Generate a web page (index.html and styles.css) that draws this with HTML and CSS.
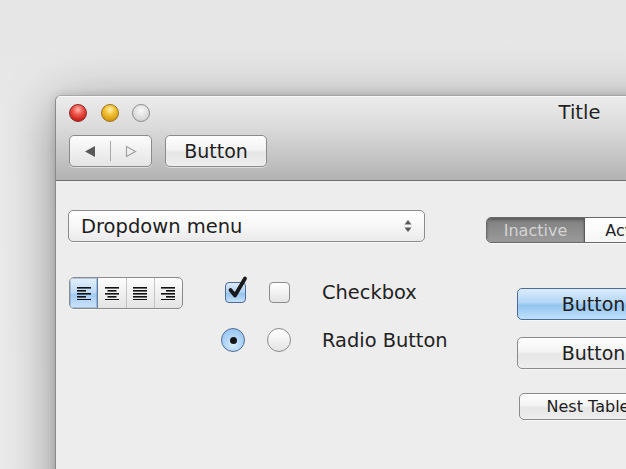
FILE: index.html
```html
<!DOCTYPE html>
<html>
<head>
<meta charset="utf-8">
<link rel="stylesheet" href="styles.css">
</head>
<body>
<div class="desktop">
  <div class="window">
    <div class="titlebar">
      <div class="title-row">
        <div class="lights">
          <span class="light red"></span>
          <span class="light yellow"></span>
          <span class="light gray"></span>
        </div>
        <div class="title">Title</div>
        <div></div>
      </div>
      <div class="toolbar">
        <div class="seg nav">
          <span class="seg-item">
            <svg width="12" height="13" viewBox="0 0 12 13"><path d="M1 6.5 L11 1 L11 12 Z" fill="#585858"/></svg>
          </span>
          <span class="seg-item">
            <svg width="12" height="13" viewBox="0 0 12 13"><path d="M1.5 1.5 L10.5 6.5 L1.5 11.5 Z" fill="none" stroke="#a2a2a2" stroke-width="1.2"/></svg>
          </span>
        </div>
        <div class="btn tb-btn">Button</div>
      </div>
    </div>
    <div class="content">
      <div class="col-left">
        <div class="dropdown">
          <span>Dropdown menu</span>
          <svg class="updown" width="8" height="14" viewBox="0 0 8 14"><path d="M4 1 L7.5 5.5 L0.5 5.5 Z M4 13 L7.5 8.5 L0.5 8.5 Z" fill="#5a5a5a"/></svg>
        </div>
        <div class="row2">
          <div class="seg align">
            <span class="seg-item sel">
              <svg width="14" height="14" viewBox="0 0 14 14" fill="#111"><rect x="0" y="1" width="14" height="1.6"/><rect x="0" y="4" width="9" height="1.6"/><rect x="0" y="7" width="14" height="1.6"/><rect x="0" y="10" width="9" height="1.6"/><rect x="0" y="13" width="14" height="1.4"/></svg>
            </span>
            <span class="seg-item">
              <svg width="14" height="14" viewBox="0 0 14 14" fill="#111"><rect x="0" y="1" width="14" height="1.6"/><rect x="2.5" y="4" width="9" height="1.6"/><rect x="0" y="7" width="14" height="1.6"/><rect x="2.5" y="10" width="9" height="1.6"/><rect x="0" y="13" width="14" height="1.4"/></svg>
            </span>
            <span class="seg-item">
              <svg width="14" height="14" viewBox="0 0 14 14" fill="#111"><rect x="0" y="1" width="14" height="1.6"/><rect x="0" y="4" width="14" height="1.6"/><rect x="0" y="7" width="14" height="1.6"/><rect x="0" y="10" width="14" height="1.6"/><rect x="0" y="13" width="14" height="1.4"/></svg>
            </span>
            <span class="seg-item">
              <svg width="14" height="14" viewBox="0 0 14 14" fill="#111"><rect x="0" y="1" width="14" height="1.6"/><rect x="5" y="4" width="9" height="1.6"/><rect x="0" y="7" width="14" height="1.6"/><rect x="5" y="10" width="9" height="1.6"/><rect x="0" y="13" width="14" height="1.4"/></svg>
            </span>
          </div>
          <div class="checks">
            <span class="box checked">
              <svg class="tick" width="22" height="24" viewBox="0 0 22 24"><path d="M4.5 13 L9 18.5 L19 1.5" fill="none" stroke="#1a1a1a" stroke-width="3.8" stroke-linecap="round" stroke-linejoin="round"/></svg>
            </span>
            <span class="box"></span>
            <span class="label">Checkbox</span>
            <span class="radio checked"><span class="dot"></span></span>
            <span class="radio"></span>
            <span class="label">Radio Button</span>
          </div>
        </div>
      </div>
      <div class="col-right">
        <div class="tabs">
          <span class="tab off">Inactive</span>
          <span class="tab on">Active</span>
        </div>
        <div class="btn wide blue">Button</div>
        <div class="btn wide second">Button</div>
        <div class="btn small">Nest Table</div>
      </div>
    </div>
  </div>
</div>
</body>
</html>
```
FILE: styles.css
```css
html, body {
  margin: 0;
  padding: 0;
}
body {
  width: 626px;
  height: 469px;
  overflow: hidden;
  background: linear-gradient(180deg, #e5e5e5 0%, #ebebeb 40%, #ececec 100%);
  font-family: "DejaVu Sans", "Liberation Sans", sans-serif;
  color: #1e1e1e;
}
.desktop {
  padding: 95px 0 0 55px;
  height: 469px;
  box-sizing: border-box;
}
.window {
  width: 1048px;
  height: 520px;
  background: #ededed;
  border: 1px solid #8a8a8a;
  border-top-color: #a8a8a8;
  border-radius: 6px 6px 0 0;
  box-shadow: 0 12px 55px rgba(0, 0, 0, 0.42), 0 0 8px rgba(0,0,0,0.15);
  overflow: hidden;
}
.titlebar {
  background: linear-gradient(180deg, #ececec 0%, #dcdcdc 35%, #c6c6c6 70%, #b3b3b3 100%);
  border-bottom: 1px solid #6e6e6e;
  box-shadow: inset 0 1px 0 rgba(255,255,255,0.8);
  padding: 8px 0 13px 13px;
  height: 63px;
}
.title-row {
  display: grid;
  grid-template-columns: 1fr auto 1fr;
  align-items: center;
  height: 18px;
  margin-left: -13px;
  padding-left: 13px;
}
.lights {
  display: flex;
  gap: 13.5px;
}
.light {
  width: 18px;
  height: 18px;
  border-radius: 50%;
  box-sizing: border-box;
}
.red {
  background: radial-gradient(circle at 50% 30%, #ffb8b0 0%, #f05a50 35%, #c8201a 75%, #a21410 100%);
  border: 1px solid #8c2a26;
}
.yellow {
  background: radial-gradient(circle at 50% 30%, #fff0b0 0%, #f2c43a 35%, #d89a10 75%, #b07a08 100%);
  border: 1px solid #9a7420;
}
.gray {
  background: radial-gradient(circle at 50% 35%, #fafafa 0%, #e2e2e2 45%, #c8c8c8 100%);
  border: 1px solid #8f8f8f;
}
.title {
  font-size: 19.5px;
  color: #222;
  text-shadow: 0 1px 0 rgba(255,255,255,0.5);
  margin-left: -14px;
  line-height: 18px;
}
.toolbar {
  display: flex;
  gap: 13px;
  margin-top: 13px;
}
.seg {
  display: flex;
  border: 1px solid #8b8b8b;
  border-radius: 5px;
  background: linear-gradient(180deg, #fdfdfd 0%, #f0f0f0 50%, #e4e4e4 100%);
  box-sizing: border-box;
  overflow: hidden;
  box-shadow: 0 1px 0 rgba(255,255,255,0.5);
  flex-shrink: 0;
}
.nav {
  width: 83px;
  height: 32px;
}
.nav .seg-item {
  flex: 1;
  display: flex;
  align-items: center;
  justify-content: center;
}
.nav .seg-item + .seg-item {
  border-left: 1px solid #a8a8a8;
  margin: 5px 0;
}
.btn {
  box-sizing: border-box;
  height: 32px;
  border: 1px solid #8b8b8b;
  border-radius: 5px;
  background: linear-gradient(180deg, #fefefe 0%, #f3f3f3 45%, #e6e6e6 55%, #eeeeee 100%);
  display: flex;
  align-items: center;
  justify-content: center;
  font-size: 19px;
  color: #1e1e1e;
  box-shadow: 0 1px 0 rgba(255,255,255,0.5);
  flex-shrink: 0;
}
.tb-btn {
  width: 102px;
}
.content {
  display: flex;
  padding: 29px 0 0 12px;
}
.col-left {
  width: 357px;
  flex-shrink: 0;
}
.dropdown {
  box-sizing: border-box;
  height: 32px;
  border: 1px solid #8b8b8b;
  border-radius: 5px;
  background: linear-gradient(180deg, #ffffff 0%, #f7f7f7 50%, #eaeaea 100%);
  display: flex;
  align-items: center;
  justify-content: space-between;
  padding: 0 12px 0 12px;
  font-size: 19.5px;
  color: #1e1e1e;
  box-shadow: 0 1px 0 rgba(255,255,255,0.6);
}
.row2 {
  display: flex;
  margin-top: 35px;
  align-items: flex-start;
}
.align {
  width: 114px;
  height: 32px;
  margin-left: 1px;
}
.align .seg-item {
  flex: 1;
  display: flex;
  align-items: center;
  justify-content: center;
  border-left: 1px solid #c4c4c4;
}
.align .seg-item:first-child {
  border-left: none;
}
.align .seg-item.sel {
  background: linear-gradient(180deg, #e4f0fc 0%, #bcd9f6 50%, #a3cbf3 55%, #cde4fa 100%);
  border-right: 1px solid #5d7ea8;
  box-shadow: inset 0 0 0 1px rgba(80,120,170,0.35);
}
.align .seg-item.sel + .seg-item {
  border-left: none;
}
.checks {
  display: grid;
  grid-template-columns: 24px 24px auto;
  grid-template-rows: 24px 24px;
  column-gap: 21px;
  row-gap: 24px;
  align-items: center;
  justify-items: center;
  margin-left: 39px;
  margin-top: 3px;
  flex-shrink: 0;
}
.checks .label {
  justify-self: start;
  font-size: 19.4px;
  color: #222;
  margin-left: 10px;
  white-space: nowrap;
}
.box {
  position: relative;
  width: 21px;
  height: 21px;
  box-sizing: border-box;
  border: 1px solid #8c8c8c;
  border-radius: 4px;
  background: linear-gradient(180deg, #ffffff 0%, #f2f2f2 50%, #e3e3e3 100%);
}
.box.checked {
  margin-left: 2px;
  border-color: #4d6c95;
  background: linear-gradient(180deg, #dbeafa 0%, #aed2f4 50%, #93c3ef 55%, #c6e1fa 100%);
}
.tick {
  position: absolute;
  left: 0px;
  top: -6px;
  overflow: visible;
}
.radio {
  width: 24px;
  height: 24px;
  box-sizing: border-box;
  border-radius: 50%;
  border: 1px solid #8c8c8c;
  background: linear-gradient(180deg, #ffffff 0%, #f2f2f2 50%, #e3e3e3 100%);
  display: flex;
  align-items: center;
  justify-content: center;
}
.radio.checked {
  margin-left: -2px;
  border-color: #4d6c95;
  background: radial-gradient(circle at 50% 70%, #d8ecfc 0%, #a8d0f4 55%, #8fbfec 100%);
}
.dot {
  width: 7px;
  height: 7px;
  border-radius: 50%;
  background: #151515;
}
.col-right {
  margin-left: 61px;
  display: flex;
  flex-direction: column;
  align-items: flex-start;
}
.tabs {
  margin-top: 7px;
  height: 26px;
  display: flex;
  box-sizing: border-box;
  border: 1px solid #6a6a6a;
  border-radius: 5px;
  overflow: hidden;
  font-size: 16px;
  box-shadow: 0 1px 0 rgba(255,255,255,0.6);
  flex-shrink: 0;
}
.tab {
  display: flex;
  align-items: center;
  justify-content: center;
}
.tab.off {
  width: 97px;
  background: linear-gradient(180deg, #7e7e7e 0%, #8d8d8d 50%, #9a9a9a 100%);
  color: #d4d4d4;
  box-shadow: inset 0 2px 3px rgba(0,0,0,0.3);
  border-right: 1px solid #5a5a5a;
}
.tab.on {
  width: 90px;
  background: linear-gradient(180deg, #ffffff 0%, #f6f6f6 100%);
  color: #222;
}
.wide {
  width: 153px;
  margin-left: 31px;
}
.blue {
  margin-top: 45px;
  border-color: #4c6d97;
  background: linear-gradient(180deg, #dcecfb 0%, #b4d6f6 45%, #94c5f0 55%, #bfe0fb 100%);
}
.second {
  margin-top: 17px;
}
.small {
  margin-top: 24px;
  margin-left: 33px;
  width: 138px;
  height: 27px;
  font-size: 16px;
}
```
